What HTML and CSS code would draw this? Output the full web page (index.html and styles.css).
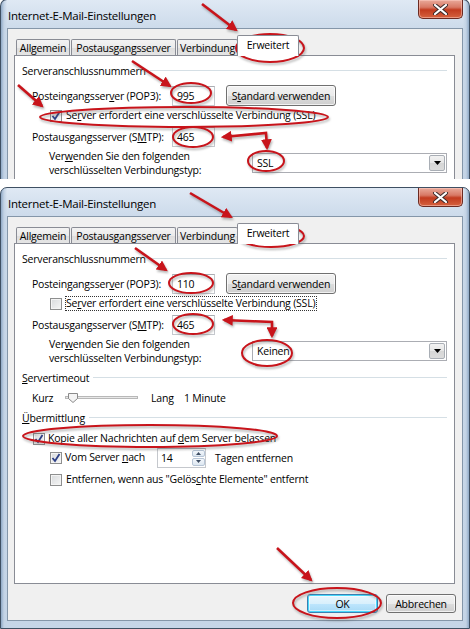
FILE: index.html
```html
<!DOCTYPE html>
<html lang="de">
<head>
<meta charset="utf-8">
<title>Internet-E-Mail-Einstellungen</title>
<link rel="stylesheet" href="styles.css">
</head>
<body>
<div class="win win1">
  <div class="titlebar">
    <span class="title">Internet-E-Mail-Einstellungen</span>
    <div class="close"><svg width="17" height="11" viewBox="0 0 17 11"><path d="M3 1 L14 10 M14 1 L3 10" stroke="#3a2a2a" stroke-width="4" stroke-linecap="round"/><path d="M3 1 L14 10 M14 1 L3 10" stroke="#fff" stroke-width="2.2" stroke-linecap="round"/></svg></div>
  </div>
  <div class="client">
    <div class="tabs">
      <div class="tab t1">Allgemein</div>
      <div class="tab t2">Postausgangsserver</div>
      <div class="tab t3">Verbindung</div>
      <div class="tab sel">Erweitert</div>
    </div>
    <div class="panel">
      <div class="grp"><span>Serveranschlussnummern</span><i class="line"></i></div>
      <div class="row port">
        <span class="lbl">Posteingangsser<u>v</u>er (POP3):</span>
        <span class="input">995</span>
        <span class="btn std">S<u>t</u>andard verwenden</span>
      </div>
      <div class="row chk">
        <span class="cb on"><svg width="10" height="10" viewBox="0 0 10 10"><path d="M1.5 5 L4 8 L8.5 1" fill="none" stroke="#2c3f86" stroke-width="1.8"/></svg></span>
        <span class="cbl">Se<u>r</u>ver erfordert eine verschlüsselte Verbindung (SSL)</span>
      </div>
      <div class="row port">
        <span class="lbl">Postausgangsserver (S<u>M</u>TP):</span>
        <span class="input">465</span>
      </div>
      <div class="row enc">
        <span class="lbl2"><span class="ln">Ver<u>w</u>enden Sie den folgenden</span><span class="ln">verschlüsselten Verbindungstyp:</span></span>
        <span class="combo"><span class="cv">SSL</span><span class="arrow"><svg width="7" height="4" viewBox="0 0 7 4"><path d="M0 0 H7 L3.5 4 Z" fill="#000"/></svg></span></span>
      </div>
    </div>
  </div>
</div>

<div class="win win2">
  <div class="titlebar">
    <span class="title">Internet-E-Mail-Einstellungen</span>
    <div class="close"><svg width="17" height="11" viewBox="0 0 17 11"><path d="M3 1 L14 10 M14 1 L3 10" stroke="#3a2a2a" stroke-width="4" stroke-linecap="round"/><path d="M3 1 L14 10 M14 1 L3 10" stroke="#fff" stroke-width="2.2" stroke-linecap="round"/></svg></div>
  </div>
  <div class="client">
    <div class="tabs">
      <div class="tab t1">Allgemein</div>
      <div class="tab t2">Postausgangsserver</div>
      <div class="tab t3">Verbindung</div>
      <div class="tab sel">Erweitert</div>
    </div>
    <div class="panel">
      <div class="grp"><span>Serveranschlussnummern</span><i class="line"></i></div>
      <div class="row port">
        <span class="lbl">Posteingangsser<u>v</u>er (POP3):</span>
        <span class="input">110</span>
        <span class="btn std">S<u>t</u>andard verwenden</span>
      </div>
      <div class="row chk">
        <span class="cb"></span>
        <span class="cbl focus">Se<u>r</u>ver erfordert eine verschlüsselte Verbindung (SSL)</span>
      </div>
      <div class="row port">
        <span class="lbl">Postausgangsserver (S<u>M</u>TP):</span>
        <span class="input">465</span>
      </div>
      <div class="row enc">
        <span class="lbl2"><span class="ln">Ver<u>w</u>enden Sie den folgenden</span><span class="ln">verschlüsselten Verbindungstyp:</span></span>
        <span class="combo"><span class="cv">Keinen</span><span class="arrow"><svg width="7" height="4" viewBox="0 0 7 4"><path d="M0 0 H7 L3.5 4 Z" fill="#000"/></svg></span></span>
      </div>
      <div class="grp g2"><span><u>S</u>ervertimeout</span><i class="line"></i></div>
      <div class="row timeout">
        <span class="kurz">Kurz</span>
        <span class="slider"><svg width="73" height="21" viewBox="0 0 73 21"><rect x="0.5" y="9.5" width="72" height="2" fill="#e8e8e8" stroke="#b8b8b8"/><path d="M3.5 6.5 H12.5 V11.5 L8 15.5 L3.5 11.5 Z" fill="#f4f4f4" stroke="#8a8a8a"/></svg></span>
        <span class="lang">Lang</span>
        <span>1 Minute</span>
      </div>
      <div class="grp g3"><span><u>Ü</u>bermittlung</span><i class="line"></i></div>
      <div class="row kopie">
        <span class="cb on"><svg width="10" height="10" viewBox="0 0 10 10"><path d="M1.5 5 L4 8 L8.5 1" fill="none" stroke="#2c3f86" stroke-width="1.8"/></svg></span>
        <span class="cbl">Kopie aller Nachrichten auf <u>d</u>em Server belassen</span>
      </div>
      <div class="row vom">
        <span class="cb on"><svg width="10" height="10" viewBox="0 0 10 10"><path d="M1.5 5 L4 8 L8.5 1" fill="none" stroke="#2c3f86" stroke-width="1.8"/></svg></span>
        <span class="cbl vl">Vom Server <u>n</u>ach</span>
        <span class="spin"><span class="sv">14</span><span class="sb"><span class="up"><svg width="5" height="3" viewBox="0 0 5 3"><path d="M0 3 H5 L2.5 0 Z" fill="#3d4d63"/></svg></span><span class="dn"><svg width="5" height="3" viewBox="0 0 5 3"><path d="M0 0 H5 L2.5 3 Z" fill="#3d4d63"/></svg></span></span></span>
        <span class="tagen">Tagen entfernen</span>
      </div>
      <div class="row entf">
        <span class="cb"></span>
        <span class="cbl">Entfernen, wenn aus "Gelös<u>c</u>hte Elemente" entfernt</span>
      </div>
    </div>
    <div class="buttons">
      <span class="btn ok">OK</span>
      <span class="btn cancel">Abbrechen</span>
    </div>
  </div>
</div>

<svg class="annot" width="470" height="629" viewBox="0 0 470 629">
  <defs>
    <marker id="ah" viewBox="0 0 10 10" refX="8" refY="5" markerWidth="4.2" markerHeight="4.2" orient="auto-start-reverse">
      <path d="M0 0 L10 5 L0 10 Z" fill="#c8141b"/>
    </marker>
  </defs>
  <g fill="none" stroke="#c8141b" stroke-width="2.6" class="marks">
    <path d="M202 4 L236 30" marker-end="url(#ah)"/>
    <ellipse cx="270" cy="48" rx="34" ry="14" stroke-width="2"/>
    <path d="M132 61 L170 86" marker-end="url(#ah)"/>
    <ellipse cx="191" cy="93" rx="20" ry="10" stroke-width="2"/>
    <path d="M18 85 L42 106" marker-end="url(#ah)"/>
    <ellipse cx="184" cy="117" rx="144" ry="10" stroke-width="2"/>
    <ellipse cx="193" cy="137" rx="20" ry="10" stroke-width="2"/>
    <path d="M223 137 L266 133 L267 148" marker-start="url(#ah)" marker-end="url(#ah)"/>
    <ellipse cx="266" cy="161" rx="18" ry="10" stroke-width="2"/>
    <path d="M190 193 L231 217" marker-end="url(#ah)"/>
    <ellipse cx="271" cy="236" rx="33" ry="11" stroke-width="2"/>
    <path d="M135 248 L166 270" marker-end="url(#ah)"/>
    <ellipse cx="191" cy="283" rx="22" ry="10" stroke-width="2"/>
    <ellipse cx="193" cy="324" rx="20" ry="10" stroke-width="2"/>
    <path d="M224 320 L272 322 L272 336" marker-start="url(#ah)" marker-end="url(#ah)"/>
    <ellipse cx="267" cy="353" rx="25" ry="13" stroke-width="2"/>
    <ellipse cx="150" cy="436" rx="127" ry="11" stroke-width="2"/>
    <path d="M277 548 L311 580" marker-end="url(#ah)"/>
    <ellipse cx="337" cy="603" rx="44" ry="15" stroke-width="2"/>
  </g>
</svg>
</body>
</html>
```

FILE: styles.css
```css
* { box-sizing: border-box; }

body {
  margin: 0;
  width: 470px;
  height: 629px;
  overflow: hidden;
  position: relative;
  background: #fff;
  font-family: "Open Sans", "DejaVu Sans", sans-serif;
  font-size: 10.5px;
  letter-spacing: -0.2px;
  color: #000;
}

u { text-decoration: underline; text-underline-offset: 1px; }

.win {
  width: 470px;
  border: 1px solid #3f5063;
  border-radius: 7px 7px 0 0;
  background:
    linear-gradient(to right, #8fa9c6 0, #c3d3e5 3px, rgba(0,0,0,0) 6px),
    linear-gradient(to left, #8fa9c6 0, #c3d3e5 3px, rgba(0,0,0,0) 6px),
    linear-gradient(#dfe9f4, #cbdaea 30px, #c5d5e7);
  display: flex;
  flex-direction: column;
}

.win1 {
  height: 180px;
  margin-top: -1px;
  overflow: hidden;
  border-bottom: none;
}

.win2 {
  height: 442px;
  margin-top: 8px;
}

.titlebar {
  height: 28px;
  flex: none;
  display: flex;
  justify-content: space-between;
  align-items: flex-start;
  padding-left: 7px;
}

.title {
  padding-top: 7px;
  line-height: 17px;
  font-size: 11.5px;
  letter-spacing: -0.25px;
  color: #000;
}

.close {
  width: 45px;
  height: 19px;
  margin-right: 6px;
  border: 1px solid #6b2a22;
  border-top: none;
  border-radius: 0 0 5px 5px;
  background: linear-gradient(#e9a99a 0, #d87965 40%, #c23b1f 55%, #d5623f 100%);
  box-shadow: inset 0 0 0 1px rgba(255,210,200,0.5);
  display: flex;
  align-items: center;
  justify-content: center;
}

.client {
  flex: none;
  height: 405px;
  margin: 0 6px;
  border: 1px solid #8496a9;
  background: #f0f0f0;
  padding: 6px 7px 7px 6px;
  display: flex;
  flex-direction: column;
}

.tabs {
  height: 20px;
  flex: none;
  display: flex;
  align-items: flex-end;
  padding-left: 2px;
}

.tab {
  height: 16px;
  border: 1px solid #898c95;
  border-bottom: none;
  border-radius: 2px 2px 0 0;
  background: linear-gradient(#f3f3f3, #ebebeb 50%, #dddddd 51%, #e5e5e5);
  margin-right: 1px;
  display: flex;
  align-items: center;
  justify-content: center;
  white-space: nowrap;
  line-height: 14px;
}

.t1 { width: 54px; }
.t2 { width: 105px; }
.t3 { width: 61px; }

.tab.sel {
  width: 62px;
  height: 21px;
  margin-left: -2px;
  margin-bottom: -1px;
  background: #fff;
  position: relative;
  z-index: 1;
  padding-bottom: 3px;
}

.panel {
  flex: none;
  height: 341px;
  background: #fff;
  border: 1px solid #898c95;
  padding: 6px 7px 0 7px;
  display: flex;
  flex-direction: column;
}

.grp {
  height: 18px;
  flex: none;
  display: flex;
  align-items: center;
  white-space: nowrap;
}

.grp .line {
  flex: 1;
  height: 2px;
  margin-left: 4px;
  border-top: 1px solid #d5dfe5;
  border-bottom: 1px solid #fff;
}

.g2 { margin-top: 7px; }
.g3 { margin-top: 1px; }

.row {
  display: flex;
  align-items: center;
  flex: none;
  white-space: nowrap;
}

.port {
  height: 21px;
  margin-top: 5px;
  padding-left: 10px;
}

.chk + .port { margin-top: 1px; }

.lbl { width: 140px; }

.input {
  width: 43px;
  height: 20px;
  border: 1px solid #c5c8cd;
  border-top-color: #abadb3;
  background: #fff;
  padding-left: 4px;
  line-height: 18px;
}

.btn {
  display: flex;
  align-items: center;
  justify-content: center;
  height: 21px;
  border: 1px solid #707070;
  border-radius: 3px;
  background: linear-gradient(#f2f2f2, #ebebeb 50%, #dddddd 51%, #cfcfcf);
  box-shadow: inset 0 0 0 1px rgba(255,255,255,0.7);
}

.std {
  width: 110px;
  margin-left: 11px;
}

.chk {
  height: 19px;
  padding-left: 28px;
}

.cb {
  width: 12px;
  height: 12px;
  flex: none;
  border: 1px solid #8e8f8f;
  background: linear-gradient(135deg, #d8dadc, #f6f6f6);
  box-shadow: inset 0 0 0 1px #f4f4f4;
  display: flex;
  align-items: center;
  justify-content: center;
}

.cbl {
  margin-left: 3px;
  line-height: 13px;
  border: 1px solid transparent;
  padding: 0 1px 0 0;
}

.cbl.focus { border: 1px dotted #333; }

.enc {
  height: 22px;
  margin-top: 5px;
  padding-left: 27px;
}

.lbl2 {
  width: 203px;
  display: flex;
  flex-direction: column;
}

.ln {
  height: 14px;
  line-height: 14px;
}

.combo {
  width: 195px;
  height: 20px;
  border: 1px solid #abadb3;
  background: #fff;
  display: flex;
  align-items: center;
  justify-content: space-between;
  padding: 0 1px 0 4px;
}

.arrow {
  width: 16px;
  height: 16px;
  border: 1px solid #a9aeb5;
  border-radius: 2px;
  background: linear-gradient(#f2f2f2, #e6e6e6 50%, #d6d6d6 51%, #dcdcdc);
  display: flex;
  align-items: center;
  justify-content: center;
}

.timeout {
  height: 21px;
  padding-left: 10px;
}

.kurz { width: 33px; }

.slider {
  width: 73px;
  height: 21px;
  margin-right: 13px;
  display: flex;
}

.lang { width: 33px; }

.kopie {
  height: 17px;
  margin-top: 3px;
  padding-left: 11px;
}

.kopie .cbl { margin-left: 2px; }

.vom {
  height: 19px;
  margin-top: 1px;
  padding-left: 28px;
}

.vl { width: 93px; margin-left: 2px; }

.spin {
  width: 49px;
  height: 20px;
  border: 1px solid #c5c8cd;
  border-top-color: #abadb3;
  background: #fff;
  display: flex;
}

.sv {
  flex: 1;
  padding-left: 3px;
  line-height: 18px;
}

.sb {
  width: 13px;
  display: flex;
  flex-direction: column;
  gap: 1px;
  padding: 1px 0 1px 0;
}

.sb span {
  flex: 1;
  border: 1px solid #b7c5d6;
  border-radius: 2px;
  background: linear-gradient(#f3f7fb, #dde7f1);
  display: flex;
  align-items: center;
  justify-content: center;
}

.tagen { margin-left: 9px; }

.entf {
  height: 19px;
  margin-top: 3px;
  padding-left: 28px;
}

.buttons {
  flex: none;
  height: 19px;
  margin-top: 10px;
  margin-right: -1px;
  display: flex;
  justify-content: flex-end;
  gap: 8px;
}

.buttons .btn { height: 19px; }

.ok {
  width: 71px;
  border-color: #3c7fb1;
  box-shadow: inset 0 0 0 1px #48d8fb, inset 0 0 0 2px rgba(255,255,255,0.5);
  background: linear-gradient(#eaf6fd, #d9f0fc 50%, #bee6fd 51%, #a7d9f5);
}

.cancel { width: 70px; }

.annot {
  position: absolute;
  left: 0;
  top: 0;
  pointer-events: none;
}

.marks {
  filter: drop-shadow(1px 2px 1px rgba(90, 90, 90, 0.45));
}
```
